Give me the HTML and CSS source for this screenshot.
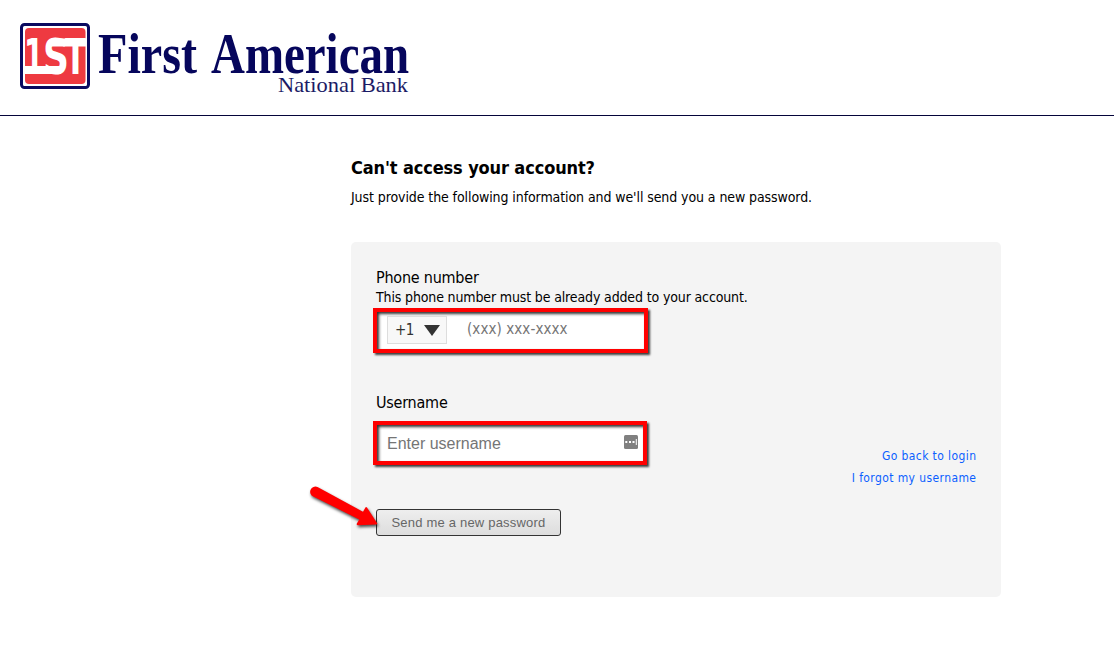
FILE: index.html
```html
<!DOCTYPE html>
<html lang="en">
<head>
  <meta charset="UTF-8" />
  <meta name="viewport" content="width=device-width, initial-scale=1.0" />
  <title>First American National Bank</title>
  <link rel="stylesheet" href="styles.css">
</head>
<body>
  <header class="header">
    <svg class="logo" width="420" height="100" viewBox="0 0 420 100">
      <rect class="logo-frame" x="21.5" y="24.5" width="67" height="63" rx="3" />
      <rect class="logo-red" x="25" y="28" width="60.5" height="56" rx="4" />
      <text class="logo-mark" x="24" y="74" textLength="20" lengthAdjust="spacingAndGlyphs">1</text>
      <text class="logo-mark" x="43" y="74" textLength="26" lengthAdjust="spacingAndGlyphs">S</text>
      <text class="logo-mark" x="65" y="74" textLength="21" lengthAdjust="spacingAndGlyphs">T</text>
      <rect class="logo-bar" x="24" y="66" width="37" height="8" />
      <rect class="logo-bar" x="51" y="38.5" width="35" height="8" />
      <text class="logo-name" x="98" y="73" textLength="99" lengthAdjust="spacingAndGlyphs">First</text>
      <text class="logo-name" x="211" y="73" textLength="198" lengthAdjust="spacingAndGlyphs">American</text>
      <text class="logo-sub" x="278" y="92" textLength="130" lengthAdjust="spacingAndGlyphs">National Bank</text>
    </svg>
  </header>

  <main class="content">
    <h1>Can't access your account?</h1>
    <p class="intro">Just provide the following information and we'll send you a new password.</p>

    <form class="panel">
      <div class="fields">
        <label class="label" for="phone">Phone number</label>
        <p class="hint">This phone number must be already added to your account.</p>
        <div class="field field-phone">
          <div class="country">+1
            <svg width="16" height="11" viewBox="0 0 16 11"><path d="M0 0h16L8 11z" fill="#333" /></svg>
          </div>
          <input id="phone" type="tel" placeholder="(xxx) xxx-xxxx">
        </div>

        <label class="label label-user" for="username">Username</label>
        <div class="field field-user">
          <input id="username" type="text" placeholder="Enter username">
          <svg class="manager" width="14" height="14" viewBox="0 0 14 14">
            <rect width="14" height="14" rx="1.5" fill="#808080" />
            <path d="M1.3 6h2v2h-2zM5 6h2v2H5zM8.5 6h2v2h-2zM11.8 4h1v6h-1z" fill="#fff" />
          </svg>
        </div>

        <div class="actions">
          <button class="send" type="button">Send me a new password</button>
          <svg class="arrow" width="80" height="52" viewBox="0 0 80 52">
            <path d="M11.5 2 57 26.8 59.3 22.7Q60 21.5 61 22.6L71 38Q71.8 39.3 70.3 39.5L52 40.2Q50 40 51 38.3L53.3 34.4 7.3 11.6A5.2 5.2 0 0 1 11.5 2z" fill="#f00" />
          </svg>
        </div>
      </div>

      <nav class="links">
        <a href="#">Go back to login</a>
        <a href="#">I forgot my username</a>
      </nav>
    </form>
  </main>
</body>
</html>
```

FILE: styles.css
```css
body {
  margin: 0;
  background: #fff;
  color: #000;
  font-family: Tahoma, "DejaVu Sans Condensed", "DejaVu Sans", sans-serif;
  font-stretch: condensed;
}
.header {
  height: 115px;
  border-bottom: 1px solid #05053a;
}
.logo {
  display: block;
}
.logo-frame {
  fill: #fff;
  stroke: #0a0a60;
  stroke-width: 3;
}
.logo-red {
  fill: #ee3a41;
}
.logo-bar {
  fill: #fff;
}
.logo-mark {
  fill: #fff;
  font: bold 49px "DejaVu Sans", sans-serif;
}
.logo-name {
  fill: #06065c;
  font: bold 57px "Liberation Serif", "Times New Roman", serif;
}
.logo-sub {
  fill: #1b1b66;
  font: 21px "Liberation Serif", "Times New Roman", serif;
}
.content {
  width: 650px;
  margin-left: 351px;
  padding-top: 40px;
}
h1 {
  margin: 0;
  font-size: 18px;
  line-height: 24px;
  letter-spacing: -0.12px;
}
.intro {
  margin: 7px 0 35px;
  font-size: 14px;
  line-height: 20px;
  letter-spacing: -0.09px;
}
.panel {
  display: flex;
  justify-content: space-between;
  box-sizing: border-box;
  height: 355px;
  padding: 26px 25px 0 22px;
  background: #f4f4f4;
  border-radius: 5px;
}
.fields {
  display: flex;
  flex-direction: column;
  align-items: flex-start;
}
.label {
  margin-left: 3px;
  font-size: 16px;
  line-height: 20px;
  letter-spacing: -0.23px;
}
.hint {
  margin: -1px 0 1px 3px;
  font-size: 14px;
  line-height: 20px;
  letter-spacing: -0.14px;
}
.field {
  display: flex;
  align-items: center;
  box-sizing: border-box;
  width: 275px;
  height: 45px;
  background: #fff;
  border: 4px solid #f00;
  box-shadow: 2px 2px 2px rgba(0, 0, 0, 0.75), inset 2px 2px 3px rgba(0, 0, 0, 0.8);
}
.field-phone {
  align-items: flex-start;
  padding: 4px 8px 0 10px;
}
.field-user {
  width: 274px;
  height: 44px;
  padding: 0 5px 2px 10px;
}
.field-user input {
  padding-top: 3px;
}
.country {
  display: flex;
  align-items: center;
  justify-content: space-between;
  box-sizing: border-box;
  width: 60px;
  height: 28px;
  flex: none;
  padding: 0 6px 0 7px;
  background: #f8f8f8;
  border: 1px solid #ddd;
  color: #333;
  font-size: 15px;
  letter-spacing: -0.5px;
}
input {
  min-width: 0;
  flex: 1;
  padding: 0;
  border: 0;
  background: none;
  outline: none;
  font: 16px "Liberation Sans", Arial, sans-serif;
}
input::placeholder {
  color: #757575;
}
.field-phone input {
  height: 26px;
  margin-left: 20px;
  font-family: Tahoma, "DejaVu Sans Condensed", sans-serif;
  font-size: 15px;
  letter-spacing: 0.08px;
}
.label-user {
  margin-top: 40px;
  margin-bottom: 8px;
}
.actions {
  position: relative;
  margin: 44px 0 0 3px;
}
.send {
  display: block;
  width: 185px;
  height: 27px;
  padding: 0;
  border: 1px solid #333;
  border-radius: 3px;
  background: linear-gradient(#eee, #ddd);
  color: #666;
  font: 13px "Liberation Sans", Arial, sans-serif;
  letter-spacing: 0.2px;
}
.arrow {
  position: absolute;
  left: -70px;
  top: -24px;
  filter: drop-shadow(1px 2px 1.5px rgba(0, 0, 0, 0.7));
}
.links {
  display: flex;
  flex-direction: column;
  align-items: flex-end;
  padding-top: 177px;
}
.links a {
  margin-right: -0.4px;
  color: #0b5fff;
  font-size: 12px;
  line-height: 22px;
  letter-spacing: 0.4px;
  text-decoration: none;
}
```
